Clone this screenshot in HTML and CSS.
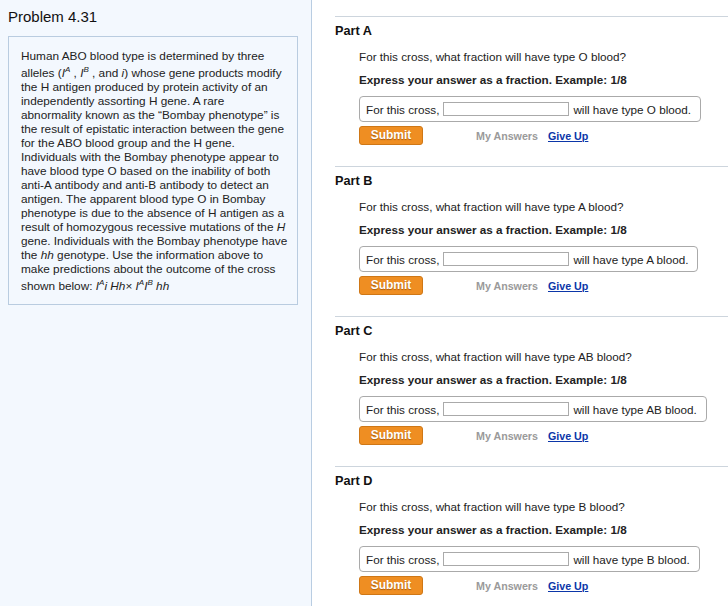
FILE: index.html
```html
<!DOCTYPE html>
<html>
<head>
<meta charset="utf-8">
<link rel="stylesheet" href="styles.css">
</head>
<body>
<div class="page">
  <aside class="problem">
    <h1 class="problem-title">Problem 4.31</h1>
    <div class="intro">
      Human ABO blood type is determined by three<br>
      alleles (<i>I</i><sup><i>A</i></sup> , <i>I</i><sup><i>B</i></sup> , and <i>i</i>) whose gene products modify<br>
      the H antigen produced by protein activity of an<br>
      independently assorting H gene. A rare<br>
      abnormality known as the “Bombay phenotype” is<br>
      the result of epistatic interaction between the gene<br>
      for the ABO blood group and the H gene.<br>
      Individuals with the Bombay phenotype appear to<br>
      have blood type O based on the inability of both<br>
      anti-A antibody and anti-B antibody to detect an<br>
      antigen. The apparent blood type O in Bombay<br>
      phenotype is due to the absence of H antigen as a<br>
      result of homozygous recessive mutations of the <i>H</i><br>
      gene. Individuals with the Bombay phenotype have<br>
      the <i>hh</i> genotype. Use the information above to<br>
      make predictions about the outcome of the cross<br>
      shown below: <i>I</i><sup><i>A</i></sup><i>i Hh</i>× <i>I</i><sup><i>A</i></sup><i>I</i><sup><i>B</i></sup> <i>hh</i>
    </div>
  </aside>
  <main class="parts">
    <section class="part">
      <h2 class="part-title">Part A</h2>
      <div class="part-body">
        <p class="question">For this cross, what fraction will have type O blood?</p>
        <p class="instruction">Express your answer as a fraction. Example: 1/8</p>
        <div class="answer"><span>For this cross,</span><span class="field"></span><span>will have type O blood.</span></div>
        <div class="actions"><span class="submit">Submit</span><span class="my-answers">My Answers</span><span class="give-up">Give Up</span></div>
      </div>
    </section>
    <section class="part">
      <h2 class="part-title">Part B</h2>
      <div class="part-body">
        <p class="question">For this cross, what fraction will have type A blood?</p>
        <p class="instruction">Express your answer as a fraction. Example: 1/8</p>
        <div class="answer"><span>For this cross,</span><span class="field"></span><span>will have type A blood.</span></div>
        <div class="actions"><span class="submit">Submit</span><span class="my-answers">My Answers</span><span class="give-up">Give Up</span></div>
      </div>
    </section>
    <section class="part">
      <h2 class="part-title">Part C</h2>
      <div class="part-body">
        <p class="question">For this cross, what fraction will have type AB blood?</p>
        <p class="instruction">Express your answer as a fraction. Example: 1/8</p>
        <div class="answer"><span>For this cross,</span><span class="field"></span><span>will have type AB blood.</span></div>
        <div class="actions"><span class="submit">Submit</span><span class="my-answers">My Answers</span><span class="give-up">Give Up</span></div>
      </div>
    </section>
    <section class="part">
      <h2 class="part-title">Part D</h2>
      <div class="part-body">
        <p class="question">For this cross, what fraction will have type B blood?</p>
        <p class="instruction">Express your answer as a fraction. Example: 1/8</p>
        <div class="answer"><span>For this cross,</span><span class="field"></span><span>will have type B blood.</span></div>
        <div class="actions"><span class="submit">Submit</span><span class="my-answers">My Answers</span><span class="give-up">Give Up</span></div>
      </div>
    </section>
  </main>
</div>
</body>
</html>
```
FILE: styles.css
```css
html, body {
  margin: 0;
  padding: 0;
  background: #fff;
}
body {
  font-family: "Liberation Sans", Arial, Helvetica, sans-serif;
  color: #222;
}
.page {
  display: flex;
  min-height: 606px;
}
.problem {
  width: 295px;
  flex: none;
  background: #f3f8fe;
  border-right: 1px solid #b9cde2;
  padding: 7px 8px 0 8px;
}
.problem-title {
  margin: 0;
  font-size: 15px;
  line-height: 20px;
  font-weight: normal;
  color: #111;
}
.intro {
  margin-top: 9px;
  width: 274px;
  border: 1px solid #b9cce0;
  padding: 12px 2px 11px 12px;
  font-size: 11.8px;
  line-height: 14px;
  color: #222;
  white-space: nowrap;
}
.intro sup {
  font-size: 8px;
}
.parts {
  flex: 1;
  padding: 16px 0 0 23px;
}
.part {
  border-top: 1px solid #cdd5dd;
  height: 149px;
}
.part-title {
  margin: 7px 0 0;
  font-size: 12.7px;
  line-height: 15px;
  font-weight: bold;
  color: #111;
}
.part-body {
  padding-left: 24px;
}
.question {
  margin: 10px 0 0;
  font-size: 11.7px;
  line-height: 15px;
}
.instruction {
  margin: 8px 0 0;
  font-size: 11.7px;
  line-height: 15px;
  font-weight: bold;
}
.answer {
  margin-top: 9px;
  display: inline-flex;
  align-items: center;
  gap: 4px;
  height: 24px;
  padding: 0 9px 0 6px;
  border: 1px solid #aaa;
  border-radius: 4px;
  font-size: 11.7px;
}
.field {
  display: inline-block;
  width: 124px;
  height: 12px;
  border: 1px solid #aaa;
  background: #fff;
}
.actions {
  margin-top: 4px;
  display: flex;
  align-items: center;
  font-size: 10.7px;
  font-weight: bold;
}
.submit {
  box-sizing: border-box;
  width: 64px;
  height: 19px;
  line-height: 17px;
  text-align: center;
  background: #ef8e22;
  border: 1px solid #cf7716;
  border-radius: 3px;
  color: #fff;
  font-size: 12px;
  text-shadow: 0 1px 1px rgba(120, 60, 0, 0.6);
}
.my-answers {
  margin-left: 53px;
  color: #9a9a9a;
}
.give-up {
  margin-left: 10px;
  color: #0b36a8;
  text-decoration: underline;
}
```
